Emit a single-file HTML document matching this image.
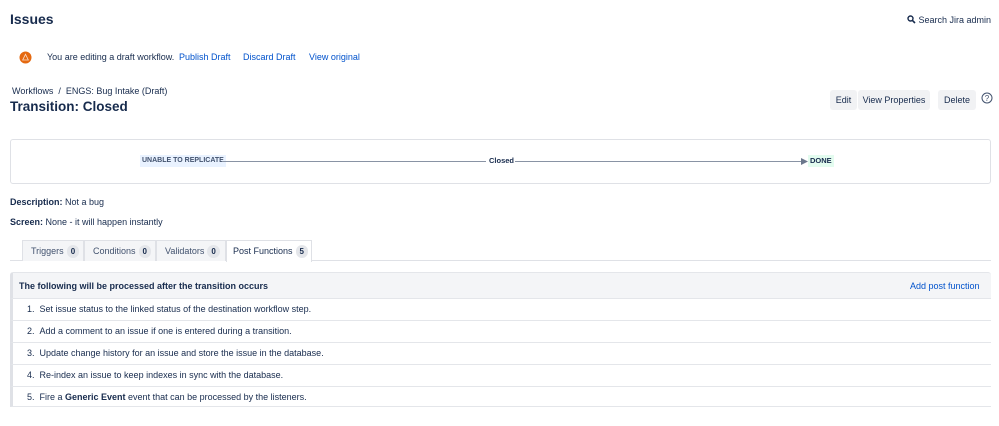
<!DOCTYPE html>
<html><head><meta charset="utf-8"><style>
*{margin:0;padding:0;box-sizing:border-box}
body{width:999px;height:426px;background:#fff;font-family:"Liberation Sans",sans-serif;color:#172b4d;font-size:9px;position:relative;overflow:hidden}
.a{position:absolute;white-space:nowrap}
.lnk{color:#0052cc}
.btn{position:absolute;top:90px;height:20px;background:#f1f2f4;border-radius:3px;font-size:9px;line-height:20px;text-align:center;color:#172b4d}
.tab{position:absolute;top:240px;height:21px;border:1px solid #dfe1e6;border-bottom:none;background:#f4f5f7;font-size:9px;line-height:20px;padding-left:8px;color:#42526e;white-space:nowrap}
.tab b{display:inline-block;font-weight:bold;background:#e4e6ea;border-radius:8px;padding:0 4px;line-height:13px;margin-left:3px;font-size:8px;color:#172b4d}
.row{position:absolute;left:10px;width:981px;height:22px;border-top:1px solid #e4e6ea;border-left:3px solid #dfe1e6;line-height:21px;padding-left:14px;color:#172b4d}
</style></head><body>
<div class="a" style="left:10px;top:11px;font-size:14px;font-weight:bold;color:#172b4d">Issues</div>
<div class="a" style="left:907px;top:15px;font-size:9px"><svg width="9" height="9" viewBox="0 0 9 9" style="vertical-align:-1px"><circle cx="3.5" cy="3.5" r="2.5" fill="none" stroke="#172b4d" stroke-width="1.4"/><path d="M5.3 5.3L8 8" stroke="#172b4d" stroke-width="1.6"/></svg> Search Jira admin</div>
<svg class="a" style="left:19px;top:51px" width="13" height="13" viewBox="0 0 13 13"><circle cx="6.5" cy="6.5" r="6" fill="#e56910"/><path d="M6.5 3.3L9.3 9H3.7Z" fill="none" stroke="#fff" stroke-width=".8" opacity=".8"/></svg>
<div class="a" style="left:47px;top:52px">You are editing a draft workflow.</div>
<div class="a lnk" style="left:179px;top:52px">Publish Draft</div>
<div class="a lnk" style="left:243px;top:52px">Discard Draft</div>
<div class="a lnk" style="left:309px;top:52px">View original</div>
<div class="a" style="left:12px;top:86px;color:#172b4d">Workflows &nbsp;/ &nbsp;ENGS: Bug Intake (Draft)</div>
<div class="a" style="left:10px;top:99px;font-size:13.5px;font-weight:bold">Transition: Closed</div>
<div class="btn" style="left:830px;width:27px">Edit</div>
<div class="btn" style="left:858px;width:72px">View Properties</div>
<div class="btn" style="left:938px;width:38px">Delete</div>
<svg class="a" style="left:981px;top:92px" width="12" height="12" viewBox="0 0 12 12"><circle cx="6" cy="6" r="5" fill="none" stroke="#42526e" stroke-width="1"/><text x="6" y="9" font-size="8" text-anchor="middle" fill="#42526e" font-family="Liberation Sans">?</text></svg>
<div class="a" style="left:10px;top:139px;width:981px;height:45px;border:1px solid #dfe1e6;border-radius:3px"></div>
<div class="a" style="left:140px;top:155px;height:12px;line-height:12px;padding:0 2px;background:#e9f2ff;font-size:7px;font-weight:bold;color:#42526e">UNABLE TO REPLICATE</div>
<div class="a" style="left:222px;top:161px;width:264px;height:1px;background:#8993a4"></div>
<div class="a" style="left:489px;top:156px;font-size:7.5px;font-weight:bold">Closed</div>
<div class="a" style="left:515px;top:161px;width:287px;height:1px;background:#8993a4"></div>
<svg class="a" style="left:801px;top:158px" width="7" height="7"><path d="M0 0L7 3.5L0 7Z" fill="#6b778c"/></svg>
<div class="a" style="left:808px;top:155px;height:12px;line-height:12px;padding:0 2px;background:#e3fcef;font-size:7.5px;font-weight:bold;color:#172b4d">DONE</div>
<div class="a" style="left:10px;top:197px"><b>Description:</b> Not a bug</div>
<div class="a" style="left:10px;top:217px"><b>Screen:</b> None - it will happen instantly</div>
<div class="a" style="left:10px;top:260px;width:981px;height:1px;background:#dfe1e6"></div>
<div class="tab" style="left:22px;width:62px">Triggers<b>0</b></div>
<div class="tab" style="left:84px;width:72px">Conditions<b>0</b></div>
<div class="tab" style="left:156px;width:70px">Validators<b>0</b></div>
<div class="tab" style="left:226px;width:86px;background:#fff;height:22px;color:#172b4d;padding-left:6px">Post Functions<b>5</b></div>
<div class="a" style="left:10px;top:272px;width:981px;height:27px;background:#f4f5f7;border-left:3px solid #dfe1e6;border-top:1px solid #e4e6ea;border-radius:3px 3px 0 0"></div>
<div class="a" style="left:19px;top:281px;font-weight:bold;color:#172b4d">The following will be processed after the transition occurs</div>
<div class="a lnk" style="left:910px;top:281px">Add post function</div>
<div class="row" style="top:298px">1.&nbsp;&nbsp;Set issue status to the linked status of the destination workflow step.</div>
<div class="row" style="top:320px">2.&nbsp;&nbsp;Add a comment to an issue if one is entered during a transition.</div>
<div class="row" style="top:342px">3.&nbsp;&nbsp;Update change history for an issue and store the issue in the database.</div>
<div class="row" style="top:364px">4.&nbsp;&nbsp;Re-index an issue to keep indexes in sync with the database.</div>
<div class="row" style="top:386px;border-bottom:1px solid #e4e6ea;height:21px">5.&nbsp;&nbsp;Fire a <b>Generic Event</b> event that can be processed by the listeners.</div>
</body></html>
